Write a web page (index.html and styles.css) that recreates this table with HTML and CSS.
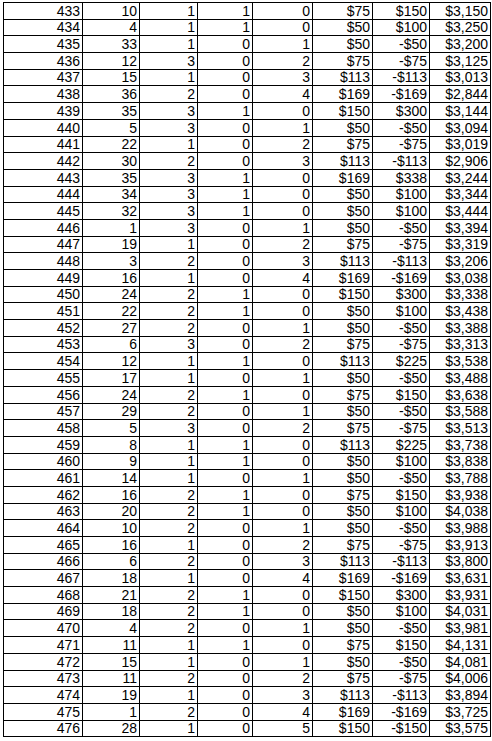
FILE: index.html
```html
<!DOCTYPE html>
<html>
<head>
<meta charset="utf-8">
<link rel="stylesheet" href="styles.css">
</head>
<body>
<table class="sheet">
<colgroup>
<col class="c1"><col class="c2"><col class="c3"><col class="c4"><col class="c5"><col class="c6"><col class="c7"><col class="c8">
</colgroup>
<tbody>
<tr><td>433</td><td>10</td><td>1</td><td>1</td><td>0</td><td>$75</td><td>$150</td><td>$3,150</td></tr>
<tr><td>434</td><td>4</td><td>1</td><td>1</td><td>0</td><td>$50</td><td>$100</td><td>$3,250</td></tr>
<tr><td>435</td><td>33</td><td>1</td><td>0</td><td>1</td><td>$50</td><td>-$50</td><td>$3,200</td></tr>
<tr><td>436</td><td>12</td><td>3</td><td>0</td><td>2</td><td>$75</td><td>-$75</td><td>$3,125</td></tr>
<tr><td>437</td><td>15</td><td>1</td><td>0</td><td>3</td><td>$113</td><td>-$113</td><td>$3,013</td></tr>
<tr><td>438</td><td>36</td><td>2</td><td>0</td><td>4</td><td>$169</td><td>-$169</td><td>$2,844</td></tr>
<tr><td>439</td><td>35</td><td>3</td><td>1</td><td>0</td><td>$150</td><td>$300</td><td>$3,144</td></tr>
<tr><td>440</td><td>5</td><td>3</td><td>0</td><td>1</td><td>$50</td><td>-$50</td><td>$3,094</td></tr>
<tr><td>441</td><td>22</td><td>1</td><td>0</td><td>2</td><td>$75</td><td>-$75</td><td>$3,019</td></tr>
<tr><td>442</td><td>30</td><td>2</td><td>0</td><td>3</td><td>$113</td><td>-$113</td><td>$2,906</td></tr>
<tr><td>443</td><td>35</td><td>3</td><td>1</td><td>0</td><td>$169</td><td>$338</td><td>$3,244</td></tr>
<tr><td>444</td><td>34</td><td>3</td><td>1</td><td>0</td><td>$50</td><td>$100</td><td>$3,344</td></tr>
<tr><td>445</td><td>32</td><td>3</td><td>1</td><td>0</td><td>$50</td><td>$100</td><td>$3,444</td></tr>
<tr><td>446</td><td>1</td><td>3</td><td>0</td><td>1</td><td>$50</td><td>-$50</td><td>$3,394</td></tr>
<tr><td>447</td><td>19</td><td>1</td><td>0</td><td>2</td><td>$75</td><td>-$75</td><td>$3,319</td></tr>
<tr><td>448</td><td>3</td><td>2</td><td>0</td><td>3</td><td>$113</td><td>-$113</td><td>$3,206</td></tr>
<tr><td>449</td><td>16</td><td>1</td><td>0</td><td>4</td><td>$169</td><td>-$169</td><td>$3,038</td></tr>
<tr><td>450</td><td>24</td><td>2</td><td>1</td><td>0</td><td>$150</td><td>$300</td><td>$3,338</td></tr>
<tr><td>451</td><td>22</td><td>2</td><td>1</td><td>0</td><td>$50</td><td>$100</td><td>$3,438</td></tr>
<tr><td>452</td><td>27</td><td>2</td><td>0</td><td>1</td><td>$50</td><td>-$50</td><td>$3,388</td></tr>
<tr><td>453</td><td>6</td><td>3</td><td>0</td><td>2</td><td>$75</td><td>-$75</td><td>$3,313</td></tr>
<tr><td>454</td><td>12</td><td>1</td><td>1</td><td>0</td><td>$113</td><td>$225</td><td>$3,538</td></tr>
<tr><td>455</td><td>17</td><td>1</td><td>0</td><td>1</td><td>$50</td><td>-$50</td><td>$3,488</td></tr>
<tr><td>456</td><td>24</td><td>2</td><td>1</td><td>0</td><td>$75</td><td>$150</td><td>$3,638</td></tr>
<tr><td>457</td><td>29</td><td>2</td><td>0</td><td>1</td><td>$50</td><td>-$50</td><td>$3,588</td></tr>
<tr><td>458</td><td>5</td><td>3</td><td>0</td><td>2</td><td>$75</td><td>-$75</td><td>$3,513</td></tr>
<tr><td>459</td><td>8</td><td>1</td><td>1</td><td>0</td><td>$113</td><td>$225</td><td>$3,738</td></tr>
<tr><td>460</td><td>9</td><td>1</td><td>1</td><td>0</td><td>$50</td><td>$100</td><td>$3,838</td></tr>
<tr><td>461</td><td>14</td><td>1</td><td>0</td><td>1</td><td>$50</td><td>-$50</td><td>$3,788</td></tr>
<tr><td>462</td><td>16</td><td>2</td><td>1</td><td>0</td><td>$75</td><td>$150</td><td>$3,938</td></tr>
<tr><td>463</td><td>20</td><td>2</td><td>1</td><td>0</td><td>$50</td><td>$100</td><td>$4,038</td></tr>
<tr><td>464</td><td>10</td><td>2</td><td>0</td><td>1</td><td>$50</td><td>-$50</td><td>$3,988</td></tr>
<tr><td>465</td><td>16</td><td>1</td><td>0</td><td>2</td><td>$75</td><td>-$75</td><td>$3,913</td></tr>
<tr><td>466</td><td>6</td><td>2</td><td>0</td><td>3</td><td>$113</td><td>-$113</td><td>$3,800</td></tr>
<tr><td>467</td><td>18</td><td>1</td><td>0</td><td>4</td><td>$169</td><td>-$169</td><td>$3,631</td></tr>
<tr><td>468</td><td>21</td><td>2</td><td>1</td><td>0</td><td>$150</td><td>$300</td><td>$3,931</td></tr>
<tr><td>469</td><td>18</td><td>2</td><td>1</td><td>0</td><td>$50</td><td>$100</td><td>$4,031</td></tr>
<tr><td>470</td><td>4</td><td>2</td><td>0</td><td>1</td><td>$50</td><td>-$50</td><td>$3,981</td></tr>
<tr><td>471</td><td>11</td><td>1</td><td>1</td><td>0</td><td>$75</td><td>$150</td><td>$4,131</td></tr>
<tr><td>472</td><td>15</td><td>1</td><td>0</td><td>1</td><td>$50</td><td>-$50</td><td>$4,081</td></tr>
<tr><td>473</td><td>11</td><td>2</td><td>0</td><td>2</td><td>$75</td><td>-$75</td><td>$4,006</td></tr>
<tr><td>474</td><td>19</td><td>1</td><td>0</td><td>3</td><td>$113</td><td>-$113</td><td>$3,894</td></tr>
<tr><td>475</td><td>1</td><td>2</td><td>0</td><td>4</td><td>$169</td><td>-$169</td><td>$3,725</td></tr>
<tr><td>476</td><td>28</td><td>1</td><td>0</td><td>5</td><td>$150</td><td>-$150</td><td>$3,575</td></tr>
</tbody>
</table>
</body>
</html>
```
FILE: styles.css
```css
html, body {
  margin: 0;
  padding: 0;
  background: #ffffff;
}

body {
  padding: 2px 0 0 3px;
  font-family: "Liberation Sans", Arial, sans-serif;
  font-size: 14px;
  color: #000000;
}

.sheet {
  border-collapse: collapse;
  table-layout: fixed;
  width: 487px;
}

.c1 { width: 79px; }
.c2 { width: 57px; }
.c3 { width: 58px; }
.c4 { width: 55px; }
.c5 { width: 60px; }
.c6 { width: 60px; }
.c7 { width: 57px; }
.c8 { width: 61px; }

.sheet tr {
  height: 16.7px;
}

.sheet td {
  border: 1px solid #000000;
  padding: 0 2px 0 0;
  text-align: right;
  vertical-align: bottom;
  line-height: 15px;
  white-space: nowrap;
  overflow: hidden;
}
```
